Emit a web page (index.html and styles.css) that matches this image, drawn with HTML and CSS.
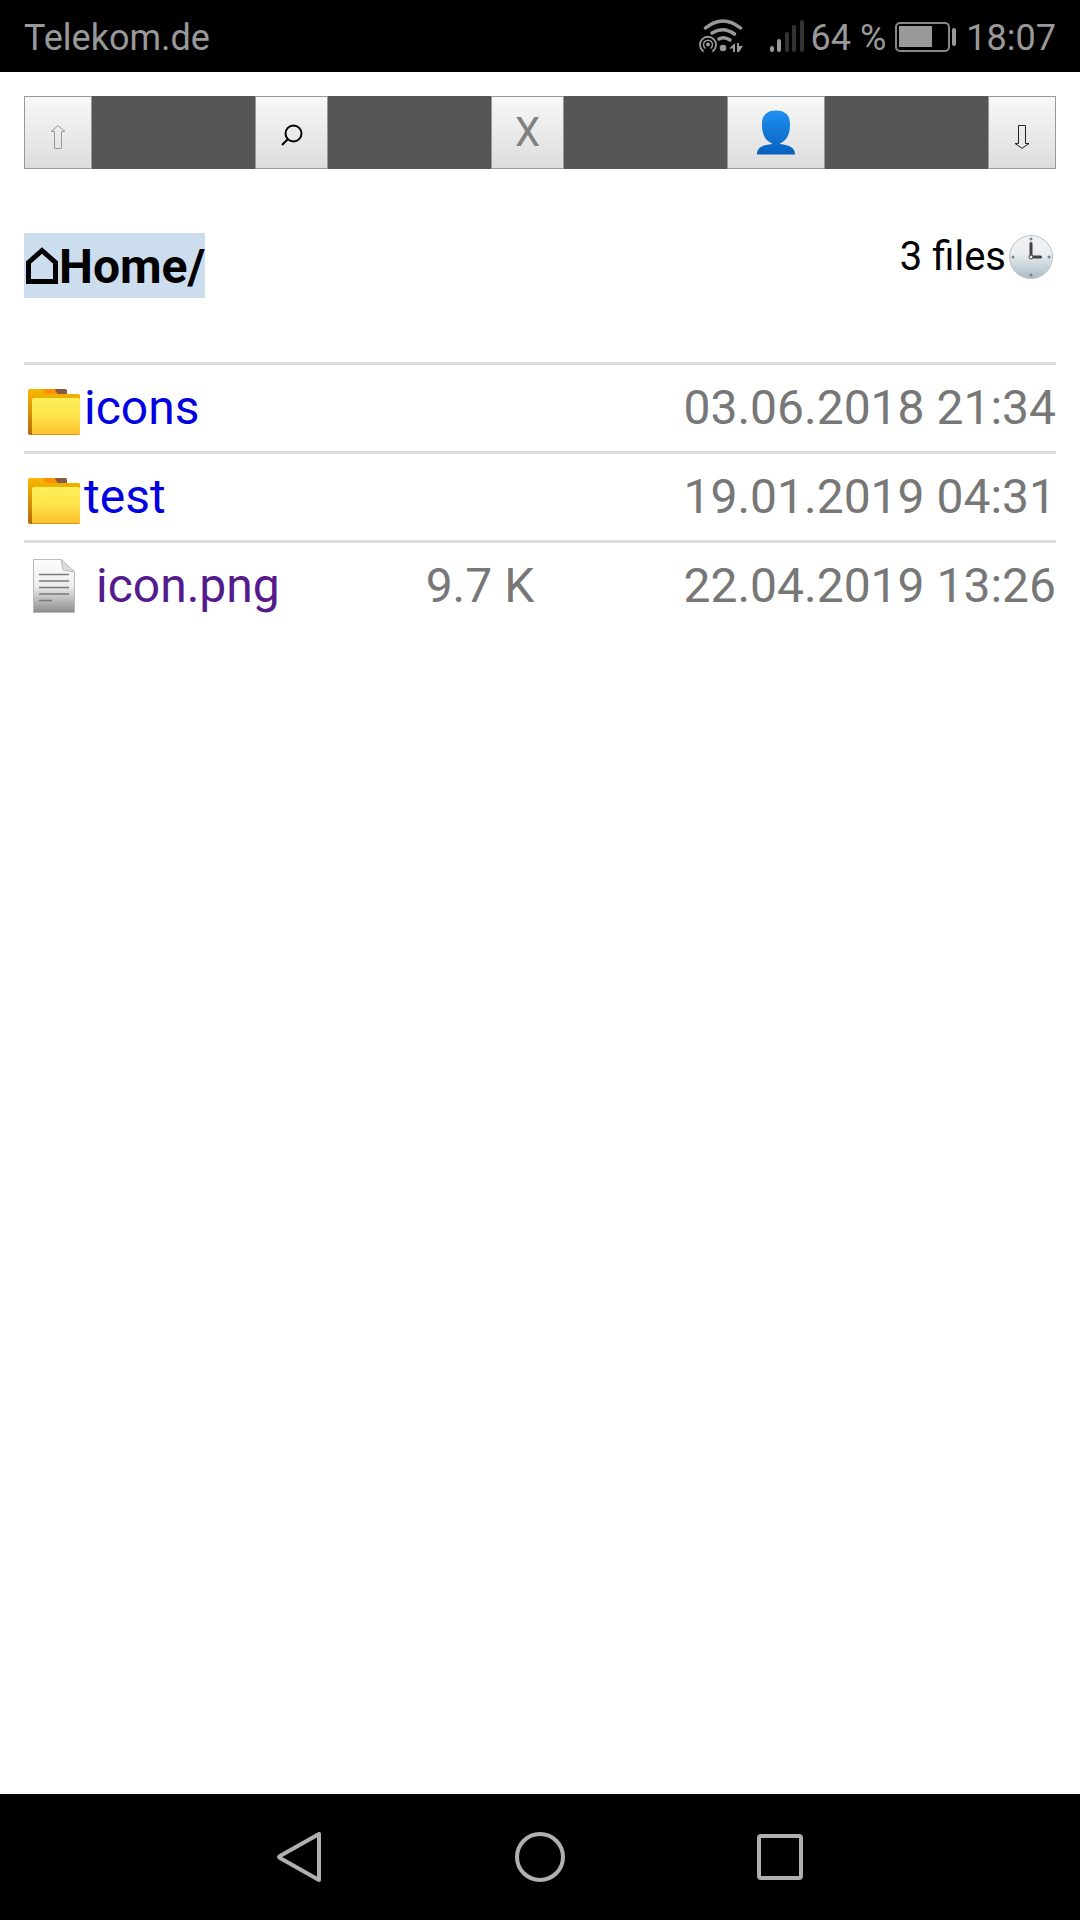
FILE: index.html
```html
<!DOCTYPE html>
<html lang="en">
<head>
<meta charset="utf-8">
<meta name="viewport" content="width=device-width, initial-scale=1">
<title>Home</title>
<link rel="stylesheet" href="styles.css">
</head>
<body>
<svg class="defs" aria-hidden="true">
  <defs>
    <linearGradient id="folder-back" x2="0" y2="1"><stop offset="0" stop-color="#f8b800"/><stop offset="1" stop-color="#b5690d"/></linearGradient>
    <linearGradient id="folder-front" x2="0" y2="1"><stop offset="0" stop-color="#ffee58"/><stop offset=".45" stop-color="#ffe54c"/><stop offset="1" stop-color="#fbc02d"/></linearGradient>
    <linearGradient id="page" x2="0" y2="1"><stop offset="0" stop-color="#fdfdfd"/><stop offset=".5" stop-color="#eeeeee"/><stop offset="1" stop-color="#8c8c8c"/></linearGradient>
    <linearGradient id="person" x2="0" y2="1"><stop offset="0" stop-color="#1e90f0"/><stop offset="1" stop-color="#0860bd"/></linearGradient>
    <linearGradient id="dial" x2="0" y2="1"><stop offset="0" stop-color="#f0f1f3"/><stop offset=".4" stop-color="#eceff1"/><stop offset="1" stop-color="#a9bcc6"/></linearGradient>
    <symbol id="folder" viewBox="0 0 54 48">
      <path d="M1 3Q1 1 3 1H38Q40 1 40 3V6H51Q53 6 53 8V45Q53 47 51 47H3Q1 47 1 45Z" fill="url(#folder-back)"/>
      <path d="M6 6H51Q53 6 53 8V12H6Z" fill="#eeb000"/>
      <path d="M17 1H30V6H19Q17 5 17 1Z" fill="#ff8f00"/>
      <path d="M28 1H38Q40 1 40 3V6H31Q29 5 28 1Z" fill="#855c43"/>
      <path d="M5 12Q5 10 7 10H51Q53 10 53 12V45Q53 47 51 47H5Z" fill="url(#folder-front)"/>
      <path d="M5 46.500H52" stroke="#d5951a"/>
    </symbol>
  </defs>
</svg>

<header class="status">
  <span class="carrier">Telekom.de</span>
  <div class="indicators">
    <svg class="wifi" viewBox="0 0 46 34" aria-label="Wi-Fi">
      <g fill="none" stroke="#999" stroke-linecap="round">
        <path d="M6.500 9Q24-5 41.500 9" stroke-width="3.500"/>
        <path d="M13 14Q24 7 35.500 15" stroke-width="3.500"/>
        <path d="M20 20Q25 17 31 21" stroke-width="3.500"/>
        <path d="M4 32A8 8 0 1 1 14 32" stroke-width="1.800"/>
        <path d="M6 29A4.500 4.500 0 1 1 12 29" stroke-width="1.500"/>
      </g>
      <circle cx="9" cy="25.500" r="2" fill="#999"/><circle cx="24" cy="29" r="3.300" fill="#999"/>
      <path d="M36 24V33H34V29.500H30ZM38 33V24H40V27H44L40 33Z" fill="#999"/>
    </svg>
    <svg class="signal" viewBox="0 0 36 34" aria-label="Signal">
      <g stroke-width="4" stroke-linecap="round"><path d="M3 29V31M10 22V31" stroke="#999"/><path d="M18 15V31M25 8V31M33 3V31" stroke="#333"/></g>
    </svg>
    <span>64 %</span>
    <svg class="battery" viewBox="0 0 62 30" aria-label="Battery">
      <rect x="1" y="1" width="53" height="28" rx="4" fill="none" stroke="#888" stroke-width="2"/>
      <rect x="4" y="4" width="33" height="21" fill="#999"/><rect x="57" y="6" width="4" height="18" rx="2" fill="#999"/>
    </svg>
    <time>18:07</time>
  </div>
</header>

<main>
  <nav class="toolbar" aria-label="File actions">
    <button class="tool" disabled aria-label="Up"><svg class="arrow" viewBox="0 0 16 24"><path d="M8 .7L15 6.500H11.500V23.500H4.500V6.500H1Z" fill="none" stroke="#999"/></svg></button>
    <button class="tool tool-mid" aria-label="Search"><svg class="search" viewBox="0 0 22 22"><circle cx="12.500" cy="9.500" r="8" fill="none" stroke="#000" stroke-width="2"/><path d="M7 15L1 21" stroke="#000" stroke-width="2"/></svg></button>
    <button class="tool tool-mid" disabled>X</button>
    <button class="tool tool-wide" aria-label="User"><svg class="person" viewBox="0 0 38 45"><path d="M19 .5C28 .5 33 5 33 14C33 25 30 30 23 33.500V34C33 35 38 38 38 44.500H0C0 38 5 35 15 34V33.500C8 30 5 25 5 14C5 5 10 .5 19 .5Z" fill="url(#person)"/></svg></button>
    <button class="tool" aria-label="Down"><svg class="arrow" viewBox="0 0 16 24"><path d="M8 23.300L15 18.500H11.500V.5H4.500V18.500H1Z" fill="none" stroke="#222"/></svg></button>
  </nav>

  <div class="heading">
    <h1 class="path"><a href="#"><svg class="home" viewBox="0 0 34 38"><path d="M3.500 34.500V15.500L17 3.500L30.500 15.500V34.500Z" fill="none" stroke="#000" stroke-width="5"/></svg>Home/</a></h1>
    <div class="count"><span>3 files</span><svg class="clock" viewBox="0 0 46 46" aria-label="Sort by time">
      <circle cx="23" cy="23" r="21.500" fill="url(#dial)" stroke="#b9c2c8"/>
      <g fill="#78838a"><circle cx="23" cy="5" r="1.500"/><circle cx="41" cy="23" r="1.500"/><circle cx="23" cy="41" r="1.500"/><circle cx="5" cy="23" r="1.500"/></g>
      <path d="M23 23V9.500M23 23H32.500" stroke="#424242" stroke-width="3" stroke-linecap="round"/><circle cx="23" cy="23" r="2" fill="#eee" stroke="#424242"/>
    </svg></div>
  </div>

  <table class="files">
    <tbody>
      <tr><td><a href="#icons"><svg class="folder" viewBox="0 0 54 48"><use href="#folder"/></svg>icons</a></td><td class="size"></td><td class="date">03.06.2018 21:34</td></tr>
      <tr><td><a href="#test"><svg class="folder" viewBox="0 0 54 48"><use href="#folder"/></svg>test</a></td><td class="size"></td><td class="date">19.01.2019 04:31</td></tr>
      <tr><td><a class="seen" href="#icon.png"><svg class="document" viewBox="0 0 42 54"><path d="M.5.5H28L41.500 13V53.500H.5Z" fill="url(#page)" stroke="#bbb"/><path d="M28 .5L41.500 13L30 11Z" fill="#ddd" stroke="#bbb"/><path d="M6 15.500H36M6 22H36M6 28.500H36M6 35H36M6 41.500H19" stroke="#7a7a7a" stroke-width="1.500"/></svg>icon.png</a></td><td class="size">9.7 K</td><td class="date">22.04.2019 13:26</td></tr>
    </tbody>
  </table>
</main>

<footer class="system">
  <button aria-label="Back"><svg viewBox="0 0 50 50"><path d="M44 2V48L5 26Q3 25 5 24Z"/></svg></button>
  <button aria-label="Home screen"><svg viewBox="0 0 50 50"><circle cx="25" cy="25" r="23"/></svg></button>
  <button aria-label="Recent apps"><svg viewBox="0 0 50 50"><rect x="4" y="4" width="42" height="42" rx="2"/></svg></button>
</footer>
</body>
</html>
```
FILE: styles.css
```css
* { box-sizing: border-box; }

body {
  display: flex;
  flex-direction: column;
  min-height: 100vh;
  margin: 0;
  background: #fff;
  color: #000;
  font-family: Roboto, "Noto Sans", sans-serif;
  font-size: 48px;
}

svg { display: block; flex: none; }
.defs { position: absolute; width: 0; height: 0; }

/* status bar */
.status {
  display: flex;
  align-items: center;
  justify-content: space-between;
  height: 72px;
  padding: 3px 24px 0;
  background: #000;
  color: #999;
  font-size: 36px;
  line-height: 48px;
}
.indicators { display: flex; align-items: center; }
.wifi { width: 46px; height: 34px; margin: 0 24px 3px 0; }
.signal { width: 36px; height: 34px; margin: 0 6px 3px 0; }
.battery { width: 62px; height: 30px; margin: 0 9px 2px; }

main { flex: 1; padding: 24px; }

/* toolbar */
.toolbar {
  display: flex;
  justify-content: space-between;
  height: 73px;
  background: #555;
}
.tool {
  display: flex;
  align-items: center;
  justify-content: center;
  width: 68px;
  padding: 0;
  border: 1px solid #999;
  border-radius: 0;
  background: linear-gradient(#f8f8f8, #ddd);
  color: #808080;
  font-family: inherit;
  font-size: 40px;
}
.tool-mid { width: 73px; }
.tool-wide { width: 98px; }
.arrow { width: 16px; height: 24px; margin-top: 9px; }
.search { width: 22px; height: 22px; margin-top: 4px; }
.person { width: 38px; height: 45px; }

/* path and file count */
.heading {
  display: flex;
  align-items: flex-start;
  justify-content: space-between;
  padding: 64px 0;
}
.path { margin: 0; font-size: 48px; line-height: 63px; }
.path a {
  display: flex;
  align-items: center;
  padding: 2px 0 0 1px;
  background: #cde;
  color: #000;
  text-decoration: none;
}
.home { width: 34px; height: 38px; margin-bottom: 2px; }
.count { display: flex; align-items: center; padding-top: 1px; font-size: 40px; line-height: 46px; }
.clock { width: 46px; height: 46px; margin: 0 2px; }

/* file list */
.files { width: 100%; border-collapse: separate; border-spacing: 0; line-height: 86px; }
.files td { padding: 0; border-top: 3px solid #ddd; white-space: nowrap; }
.files a { display: flex; align-items: center; color: #0000e0; text-decoration: none; }
.files a.seen { color: #551a8b; }
.folder { width: 54px; height: 48px; margin: 8px 3px 0; }
.document { width: 42px; height: 54px; margin: 0 21px 0 9px; }
.files .size, .files .date { color: #777; text-align: right; }

/* system navigation */
.system {
  display: flex;
  align-items: center;
  justify-content: center;
  gap: 190px;
  height: 126px;
  background: #000;
}
.system button { padding: 0; border: 0; background: none; }
.system svg { width: 50px; height: 50px; fill: none; stroke: #b0b0b0; stroke-width: 4; stroke-linejoin: round; }
```
